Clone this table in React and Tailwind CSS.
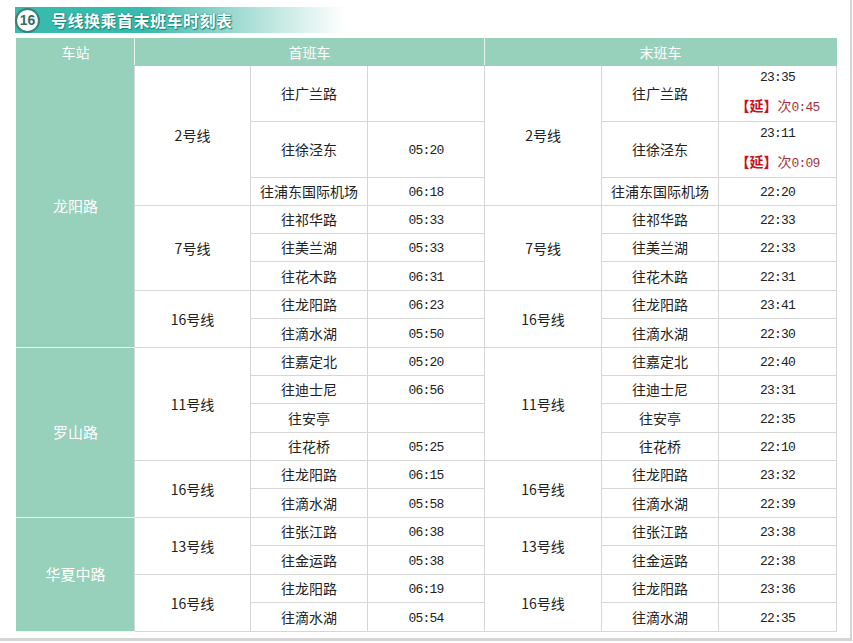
import React from 'react';

const stations = [
  {
    name: '龙阳路',
    lines: [
      {
        line: '2号线',
        rows: [
          { dir: '往广兰路', first: '', last: '23:35', ext: '0:45', h: 'h-[56px]' },
          { dir: '往徐泾东', first: '05:20', last: '23:11', ext: '0:09', h: 'h-[56px]' },
          { dir: '往浦东国际机场', first: '06:18', last: '22:20', h: 'h-[28px]' },
        ],
      },
      {
        line: '7号线',
        rows: [
          { dir: '往祁华路', first: '05:33', last: '22:33', h: 'h-[28px]' },
          { dir: '往美兰湖', first: '05:33', last: '22:33', h: 'h-[28px]' },
          { dir: '往花木路', first: '06:31', last: '22:31', h: 'h-[29px]' },
        ],
      },
      {
        line: '16号线',
        rows: [
          { dir: '往龙阳路', first: '06:23', last: '23:41', h: 'h-[28px]' },
          { dir: '往滴水湖', first: '05:50', last: '22:30', h: 'h-[29px]' },
        ],
      },
    ],
  },
  {
    name: '罗山路',
    lines: [
      {
        line: '11号线',
        rows: [
          { dir: '往嘉定北', first: '05:20', last: '22:40', h: 'h-[28px]' },
          { dir: '往迪士尼', first: '06:56', last: '23:31', h: 'h-[28px]' },
          { dir: '往安亭', first: '', last: '22:35', h: 'h-[29px]' },
          { dir: '往花桥', first: '05:25', last: '22:10', h: 'h-[28px]' },
        ],
      },
      {
        line: '16号线',
        rows: [
          { dir: '往龙阳路', first: '06:15', last: '23:32', h: 'h-[28px]' },
          { dir: '往滴水湖', first: '05:58', last: '22:39', h: 'h-[29px]' },
        ],
      },
    ],
  },
  {
    name: '华夏中路',
    lines: [
      {
        line: '13号线',
        rows: [
          { dir: '往张江路', first: '06:38', last: '23:38', h: 'h-[28px]' },
          { dir: '往金运路', first: '05:38', last: '22:38', h: 'h-[29px]' },
        ],
      },
      {
        line: '16号线',
        rows: [
          { dir: '往龙阳路', first: '06:19', last: '23:36', h: 'h-[28px]' },
          { dir: '往滴水湖', first: '05:54', last: '22:35', h: 'h-[29px]' },
        ],
      },
    ],
  },
];

const cell = 'border border-[#d6d6d6] p-0 text-center align-middle';
const mono = "font-['Liberation_Mono',monospace] text-[13px] tracking-[-0.8px] text-[#222]";

const LastTime = ({ row }) => {
  if (!row.ext) return <span className={mono}>{row.last}</span>;
  return (
    <div className="flex flex-col items-center">
      <div className={`${mono} leading-[24px]`}>{row.last}</div>
      <div className="mt-[3px] leading-[24px] text-[14px]">
        <span className="font-bold text-[#c8101a]">【延】</span>
        <span className="text-[#a8323a]">次</span>
        <span className={`${mono} !text-[#a8323a]`}>{row.ext}</span>
      </div>
    </div>
  );
};

const App = () => {
  const body = [];
  stations.forEach((st, si) => {
    const stationSpan = st.lines.reduce((n, l) => n + l.rows.length, 0);
    st.lines.forEach((ln, li) => {
      ln.rows.forEach((row, ri) => {
        body.push(
          <tr key={`${si}-${li}-${ri}`} className={row.h}>
            {li === 0 && ri === 0 ? (
              <td
                rowSpan={stationSpan}
                className="border-y border-l border-r border-y-[#e9f6f1] border-l-[#97d0bb] border-r-[#d6d6d6] bg-[#97d0bb] p-0 text-center align-middle text-[15px] text-white"
              >
                {st.name}
              </td>
            ) : null}
            {ri === 0 ? (
              <td rowSpan={ln.rows.length} className={cell}>
                {ln.line}
              </td>
            ) : null}
            <td className={cell}>{row.dir}</td>
            <td className={cell}>
              <span className={mono}>{row.first}</span>
            </td>
            {ri === 0 ? (
              <td rowSpan={ln.rows.length} className={cell}>
                {ln.line}
              </td>
            ) : null}
            <td className={cell}>{row.dir}</td>
            <td className={`${cell} ${row.ext ? 'align-top' : ''}`}>
              <LastTime row={row} />
            </td>
          </tr>
        );
      });
    });
  });

  return (
    <div className="h-[643px] w-[853px] bg-white font-['Noto_Sans_CJK_SC','Noto_Sans',sans-serif] text-[14px] text-[#222]">
      <div className="h-[641px] w-[852px] border-r-2 border-b-[3px] border-[#d4d4d4] bg-white pt-[7px]">
        <div className="ml-[15px] flex h-[26px] w-[330px] items-center bg-linear-to-r from-[#36bbad] from-40% to-white">
          <div className="flex h-[25px] w-[25px] items-center justify-center rounded-full border-2 border-[#3a7e78] bg-white text-[14px] font-bold text-[#2f6d67] font-['Liberation_Sans',sans-serif]">
            16
          </div>
          <div className="ml-[11px] text-[16px] font-bold tracking-[0.5px] text-white [text-shadow:0_0_1px_#16867c,0_0_1px_#16867c,1px_1px_1px_#16867c]">
            号线换乘首末班车时刻表
          </div>
        </div>
        <table className="ml-[16px] mt-[5px] w-[820px] table-fixed border-collapse">
          <colgroup>
            <col className="w-[118px]" />
            <col className="w-[116px]" />
            <col className="w-[117px]" />
            <col className="w-[117px]" />
            <col className="w-[117px]" />
            <col className="w-[117px]" />
            <col className="w-[118px]" />
          </colgroup>
          <thead>
            <tr className="h-[27px] bg-[#97d0bb] text-[14px] text-white">
              <td className="border border-[#97d0bb] border-r-[#e4f3ed] p-0 text-center">车站</td>
              <td colSpan={3} className="border border-[#97d0bb] border-r-[#e4f3ed] p-0 text-center">
                首班车
              </td>
              <td colSpan={3} className="border border-[#97d0bb] p-0 text-center">
                末班车
              </td>
            </tr>
          </thead>
          <tbody>{body}</tbody>
        </table>
      </div>
    </div>
  );
};

export default App;
